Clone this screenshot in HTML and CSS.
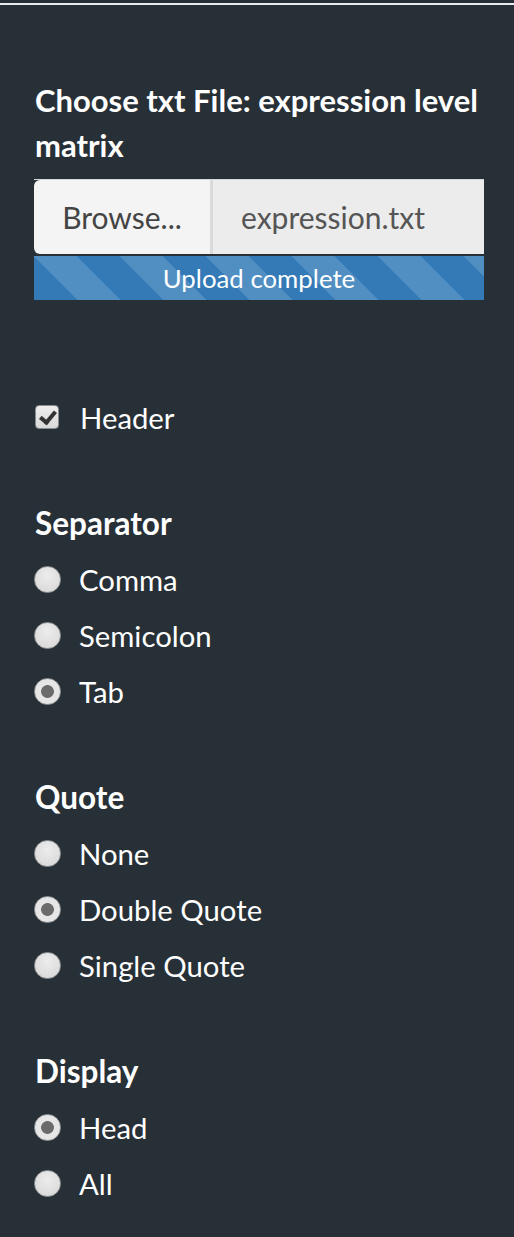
FILE: index.html
```html
<!DOCTYPE html>
<html>
<head>
<meta charset="utf-8">
<link rel="stylesheet" href="styles.css">
</head>
<body>
<div class="topline"></div>
<form class="panel">
  <div class="file-group">
    <label class="control-label">Choose txt File: expression level matrix</label>
    <div class="input-group">
      <span class="btn-browse">Browse...</span>
      <span class="file-name">expression.txt</span>
    </div>
    <div class="progress"><span>Upload complete</span></div>
  </div>

  <div class="group">
    <label class="option"><input type="checkbox" class="check" checked><span>Header</span></label>
  </div>

  <div class="group">
    <div class="group-label">Separator</div>
    <label class="option"><input type="radio" name="sep" class="radio"><span>Comma</span></label>
    <label class="option"><input type="radio" name="sep" class="radio"><span>Semicolon</span></label>
    <label class="option"><input type="radio" name="sep" class="radio" checked><span>Tab</span></label>
  </div>

  <div class="group">
    <div class="group-label">Quote</div>
    <label class="option"><input type="radio" name="quote" class="radio"><span>None</span></label>
    <label class="option"><input type="radio" name="quote" class="radio" checked><span>Double Quote</span></label>
    <label class="option"><input type="radio" name="quote" class="radio"><span>Single Quote</span></label>
  </div>

  <div class="group">
    <div class="group-label">Display</div>
    <label class="option"><input type="radio" name="disp" class="radio" checked><span>Head</span></label>
    <label class="option"><input type="radio" name="disp" class="radio"><span>All</span></label>
  </div>
</form>
</body>
</html>
```

FILE: styles.css
```css
html, body {
  margin: 0;
  padding: 0;
  background: #283037;
}
body {
  font-family: "Source Sans Pro", Lato, "Noto Sans", sans-serif;
  font-size: 29.3px;
  color: #ffffff;
  width: 514px;
  height: 1237px;
  overflow: hidden;
}
.topline {
  margin-top: 3px;
  height: 2px;
  background: #e9ebec;
}
.panel {
  margin: 0;
  padding: 0 30px 0 34px;
}
.file-group {
  padding-top: 73px;
}
.control-label {
  display: block;
  font-weight: 700;
  font-size: 31px;
  line-height: 45px;
  padding-left: 1px;
  margin-bottom: 11px;
}
.input-group {
  display: flex;
  height: 75px;
  box-sizing: border-box;
  border-top: 1px solid #d3d7de;
  font-size: 30px;
}
.btn-browse {
  width: 176px;
  display: flex;
  align-items: center;
  justify-content: center;
  background: #f4f4f4;
  color: #444444;
  border-radius: 6px 0 0 6px;
  border-right: 3px solid #d9dadc;
}
.file-name {
  flex: 1;
  display: flex;
  align-items: center;
  padding-left: 28px;
  background: #ececec;
  color: #555555;
}
.progress {
  margin-top: 2px;
  height: 44px;
  background-color: #337ab7;
  background-image: linear-gradient(45deg,
    rgba(255,255,255,.15) 25%, transparent 25%, transparent 50%,
    rgba(255,255,255,.15) 50%, rgba(255,255,255,.15) 75%, transparent 75%, transparent);
  background-size: 86px 86px;
  display: flex;
  align-items: center;
  justify-content: center;
  font-size: 25.8px;
  color: #ffffff;
}
.group {
  margin-top: 50px;
}
.file-group + .group {
  margin-top: 89px;
}
.group-label {
  height: 56px;
  line-height: 56px;
  font-weight: 700;
  font-size: 31.5px;
  padding-left: 1px;
}
.option {
  display: flex;
  align-items: center;
  height: 56px;
}
.option span {
  margin-left: 18px;
}
.check {
  -webkit-appearance: none;
  appearance: none;
  margin: 0 0 0 1px;
  width: 24px;
  height: 24px;
  box-sizing: border-box;
  border: 1px solid #8a8d90;
  border-radius: 4px;
  background: linear-gradient(#eeeeee, #d9d9d9);
  position: relative;
  flex: none;
}
.check + span {
  margin-left: 21px;
}
.check:checked::after {
  content: "";
  position: absolute;
  left: 7px;
  top: 2px;
  width: 6px;
  height: 12px;
  border: solid #333333;
  border-width: 0 4px 4px 0;
  transform: rotate(40deg);
}
.radio {
  -webkit-appearance: none;
  appearance: none;
  margin: 0;
  width: 27px;
  height: 27px;
  box-sizing: border-box;
  border-radius: 50%;
  border: 1px solid #9a9c9e;
  background: radial-gradient(circle at 50% 35%, #ececec, #d6d6d6);
  flex: none;
}
.radio:checked {
  background: radial-gradient(circle, #6b6b6b 0, #6b6b6b 6px, #e6e6e6 6.8px);
}
```
